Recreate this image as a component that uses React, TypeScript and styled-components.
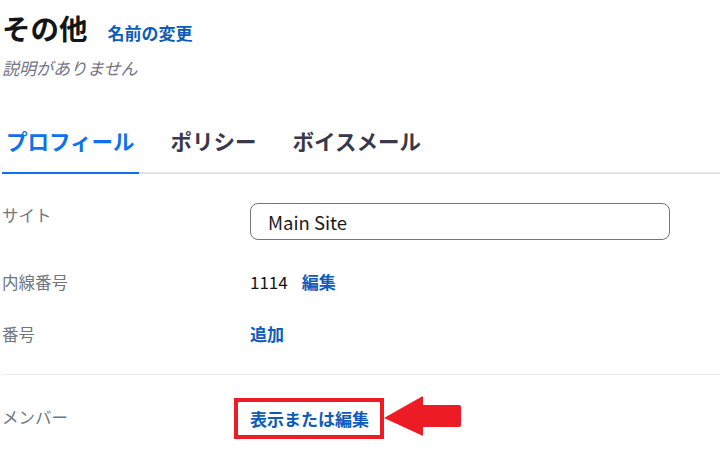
import styled, {createGlobalStyle} from 'styled-components'

const GlobalStyle = createGlobalStyle`
  body {
    margin: 0;
    background: #ffffff;
    font-family: 'Noto Sans CJK JP', 'Noto Sans', sans-serif;
  }
`

const tabs = ['プロフィール', 'ポリシー', 'ボイスメール']

export default function App() {
  return (
    <Page>
      <GlobalStyle />
      <Header>
        <TitleRow>
          <Title>その他</Title>
          <RenameLink>名前の変更</RenameLink>
        </TitleRow>
        <Description>説明がありません</Description>
      </Header>

      <TabList>
        {tabs.map((tab, i) => (
          <Tab key={tab} active={i === 0}>
            {tab}
          </Tab>
        ))}
      </TabList>

      <Rows>
        <Row $gap={29}>
          <Label>サイト</Label>
          <SiteInput>Main Site</SiteInput>
        </Row>
        <Row $gap={30}>
          <Label>内線番号</Label>
          <Value>
            <Plain>1114</Plain>
            <Link>編集</Link>
          </Value>
        </Row>
        <Row $gap={28}>
          <Label>番号</Label>
          <Value>
            <Link>追加</Link>
          </Value>
        </Row>
        <Divider />
        <Row $gap={30}>
          <Label>メンバー</Label>
          <Value>
            <Highlight>
              <Link>表示または編集</Link>
            </Highlight>
            <Arrow width="78" height="41" viewBox="0 0 78 41">
              <path
                d="M0 22 L38 0.5 Q39 0 39 1.5 L39 9 L75 9 Q77 9 77 11 L77 29 Q77 31 75 31 L39 31 L39 38.5 Q39 40 38 39.5 Z"
                fill="#ed1c24"
              />
            </Arrow>
          </Value>
        </Row>
      </Rows>
    </Page>
  )
}

const Page = styled.div`
  width: 720px;
  height: 463px;
  padding: 8px 0 0 2px;
  box-sizing: border-box;
  overflow: hidden;
`

const Header = styled.div`
  display: flex;
  flex-direction: column;
  gap: 8px;
`

const TitleRow = styled.div`
  display: flex;
  align-items: baseline;
  gap: 20px;
`

const Title = styled.h1`
  margin: 0;
  font-size: 28.5px;
  line-height: 40px;
  font-weight: 700;
  color: #131619;
`

const RenameLink = styled.a`
  font-size: 17px;
  font-weight: 700;
  color: #0e5cba;
  cursor: pointer;
`

const Description = styled.div`
  font-size: 17px;
  line-height: 24px;
  font-style: italic;
  color: #747487;
`

const TabList = styled.div`
  display: flex;
  gap: 28px;
  margin-top: 46px;
  border-bottom: 2px solid #dfe3e8;
`

const Tab = styled.div<{active?: boolean}>`
  padding: 0 4px 16px 4px;
  margin-bottom: -2px;
  font-size: 21.5px;
  line-height: 30px;
  font-weight: 700;
  color: ${(p) => (p.active ? '#0e72ed' : '#39394d')};
  border-bottom: 2px solid ${(p) => (p.active ? '#0e72ed' : 'transparent')};
`

const Rows = styled.div`
  display: flex;
  flex-direction: column;
`

const Row = styled.div<{$gap: number}>`
  display: grid;
  grid-template-columns: 248px 1fr;
  align-items: start;
  margin-top: ${(p) => p.$gap}px;
`

const Label = styled.div`
  font-size: 16.5px;
  line-height: 24px;
  color: #6e7680;
`

const Value = styled.div`
  display: flex;
  align-items: center;
  gap: 14px;
  font-size: 17px;
  line-height: 24px;
`

const Plain = styled.span`
  color: #131619;
`

const Link = styled.a`
  font-weight: 700;
  color: #0e5cba;
  cursor: pointer;
`

const SiteInput = styled.div`
  width: 420px;
  height: 37px;
  box-sizing: border-box;
  padding: 0 17px;
  border: 1px solid #747487;
  border-radius: 8px;
  display: flex;
  align-items: center;
  font-size: 18.5px;
  color: #1a1a1a;
`

const Divider = styled.div`
  height: 1px;
  background: #ececec;
  margin-top: 28px;
`

const Highlight = styled.div`
  margin: -7px 0 -10px -16px;
  padding: 0 11px 0 12px;
  border: 4px solid #ed1c24;
  display: flex;
  align-items: center;
  height: 33px;
`

const Arrow = styled.svg`
  margin: -9px 0 -8px -14px;
  flex-shrink: 0;
`
